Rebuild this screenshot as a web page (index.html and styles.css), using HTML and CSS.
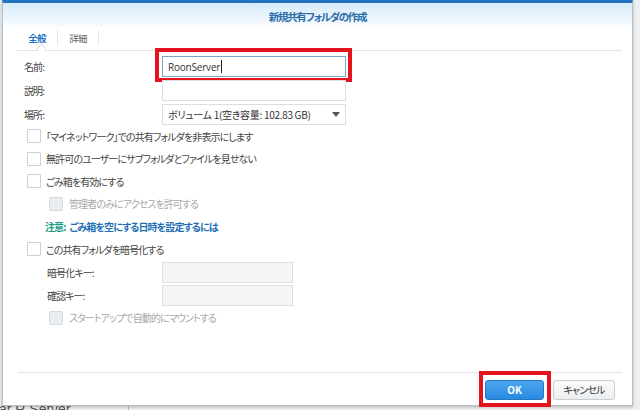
FILE: index.html
```html
<!DOCTYPE html>
<html lang="ja">
<head>
<meta charset="utf-8">
<title>新規共有フォルダの作成</title>
<link rel="stylesheet" href="styles.css">
</head>
<body>
<div class="desk">
  <div class="behind">ar R Server</div>
  <div class="dialog">
    <div class="titlebar">新規共有フォルダの作成</div>
    <div class="tabs">
      <div class="tab active">全般</div>
      <div class="tab">詳細</div>
    </div>
    <div class="body">
      <div class="field">
        <div class="label">名前:</div>
        <div class="input focus highlight"><span class="value">RoonServer</span><span class="caret"></span></div>
      </div>
      <div class="field">
        <div class="label">説明:</div>
        <div class="input"></div>
      </div>
      <div class="field">
        <div class="label">場所:</div>
        <div class="input select"><span class="value">ボリューム 1(空き容量: 102.83 GB)</span><span class="arrow"></span></div>
      </div>
      <div class="check"><span class="box"></span><span>「マイネットワーク」での共有フォルダを非表示にします</span></div>
      <div class="check"><span class="box"></span><span>無許可のユーザーにサブフォルダとファイルを見せない</span></div>
      <div class="check"><span class="box"></span><span>ごみ箱を有効にする</span></div>
      <div class="check sub disabled"><span class="box"></span><span>管理者のみにアクセスを許可する</span></div>
      <div class="note"><span class="note-label">注意:</span><span class="note-link">ごみ箱を空にする日時を設定するには</span></div>
      <div class="check"><span class="box"></span><span>この共有フォルダを暗号化する</span></div>
      <div class="field key">
        <div class="label">暗号化キー:</div>
        <div class="input short disabled-input"></div>
      </div>
      <div class="field key">
        <div class="label">確認キー:</div>
        <div class="input short disabled-input"></div>
      </div>
      <div class="check sub disabled"><span class="box"></span><span>スタートアップで自動的にマウントする</span></div>
    </div>
    <div class="footer">
      <div class="btn primary highlight">OK</div>
      <div class="btn">キャンセル</div>
    </div>
  </div>
</div>
</body>
</html>
```
FILE: styles.css
```css
* { box-sizing: border-box; }
html, body {
  margin: 0;
  padding: 0;
  width: 640px;
  height: 410px;
  overflow: hidden;
  background: #eeeff0;
  font-family: "Noto Sans CJK JP", "Noto Sans", sans-serif;
  font-feature-settings: "palt";
  color: #444;
}
.desk {
  position: relative;
  width: 640px;
  height: 410px;
  padding-left: 2px;
}
.behind {
  position: absolute;
  left: -1px;
  top: 401px;
  font-family: "Liberation Sans", sans-serif;
  font-size: 14px;
  line-height: 16px;
  color: #555;
  width: 130px;
  border-right: 1px solid #bbb;
  height: 20px;
}
.dialog {
  position: relative;
  z-index: 1;
  width: 631px;
  height: 406px;
  background: #fff;
  border: 1px solid #b9c0c7;
  border-top: 3px solid #2174c0;
  box-shadow: 0 1px 3px rgba(0,0,0,0.25);
  display: flex;
  flex-direction: column;
}
.titlebar {
  height: 27px;
  line-height: 27px;
  text-align: center;
  font-size: 10.5px;
  font-weight: bold;
  letter-spacing: -1.3px;
  color: #2a6ea8;
  background: linear-gradient(#d7ebfa, #eef6fd 60%, #ffffff);
}
.tabs {
  position: relative;
  display: flex;
  height: 21px;
  margin: 0 10px 0 14px;
  border-bottom: 1px solid #e3e3e3;
}
.tab {
  width: 41px;
  height: 16px;
  line-height: 16px;
  text-align: center;
  border-right: 1px solid #e6e6e6;
  font-size: 9.5px;
  letter-spacing: -0.8px;
  color: #666;
}
.tab.active {
  color: #2274c4;
  font-weight: bold;
  position: relative;
}
.tab.active::after {
  content: "";
  position: absolute;
  left: 21px;
  bottom: -6px;
  width: 6px;
  height: 6px;
  background: #fff;
  border-left: 1px solid #dcdcdc;
  border-top: 1px solid #dcdcdc;
  transform: rotate(45deg);
}
.body {
  flex: 1;
  padding: 2px 0 0 21px;
  font-size: 10px;
  letter-spacing: -0.9px;
}
.field {
  display: flex;
  align-items: center;
  height: 21px;
  margin-top: 3px;
}
.label {
  width: 138px;
  color: #444;
}
.input {
  position: relative;
  width: 184px;
  height: 21px;
  border: 1px solid #dcdfe2;
  background: #fff;
  display: flex;
  align-items: center;
  padding-left: 5px;
}
.input.focus {
  border-color: #7aa5c6;
}
.value {
  color: #333;
}
.focus .value {
  font-family: "Open Sans", "Noto Sans", sans-serif;
  font-size: 10px;
  letter-spacing: -0.2px;
}
.caret {
  display: inline-block;
  width: 1px;
  height: 13px;
  background: #222;
  margin-left: 1px;
}
.select .value {
  flex: 1;
  letter-spacing: -0.3px;
}
.arrow {
  width: 0;
  height: 0;
  border-left: 4px solid transparent;
  border-right: 4px solid transparent;
  border-top: 5px solid #555;
  margin-right: 5px;
}
.highlight::after {
  content: "";
  position: absolute;
  border: 4px solid #e3141d;
}
.input.highlight::after {
  left: -8px;
  top: -9px;
  right: -7px;
  bottom: -6px;
}
.check {
  display: flex;
  align-items: center;
  height: 22.5px;
  padding-left: 3px;
}
.check .box {
  width: 14px;
  height: 14px;
  border: 1px solid #cfcfcf;
  background: #fff;
  margin-right: 5px;
  border-radius: 1px;
}
.check.sub {
  padding-left: 25px;
}
.check.sub .box {
  margin-right: 6px;
}
.check.disabled {
  color: #a8a8a8;
}
.check.disabled .box {
  background: #e9edf1;
  border-color: #d6dbe0;
}
.note {
  height: 23px;
  line-height: 23px;
  padding-left: 21px;
  font-weight: bold;
}
.note-label {
  color: #1a9a82;
  margin-right: 4px;
}
.note-link { color: #1d6fb5; }
.field.key {
  height: 22px;
  margin-top: 1px;
}
.field.key .label {
  padding-left: 23px;
}
.input.short {
  width: 131px;
  height: 21px;
}
.disabled-input {
  background: #f3f5f7;
  border-color: #dde0e3;
}
.footer {
  height: 33px;
  margin: 0 10px 0 15px;
  border-top: 1px solid #e4e4e4;
  display: flex;
  justify-content: flex-end;
  align-items: flex-start;
  gap: 9px;
  padding: 7px 7px 0 0;
}
.btn {
  position: relative;
  width: 62px;
  height: 20px;
  line-height: 18px;
  text-align: center;
  font-size: 10px;
  letter-spacing: -0.8px;
  color: #333;
  border: 1px solid #c9cdd1;
  border-radius: 3px;
  background: linear-gradient(#fbfbfb, #ebedef);
}
.btn.primary {
  width: 59px;
  color: #fff;
  font-weight: bold;
  letter-spacing: 0;
  border-color: #2378c6;
  background: linear-gradient(#4aa6ee, #2a8ae0);
}
.btn.highlight::after {
  left: -7px;
  top: -10px;
  right: -8px;
  bottom: -8px;
}
```
